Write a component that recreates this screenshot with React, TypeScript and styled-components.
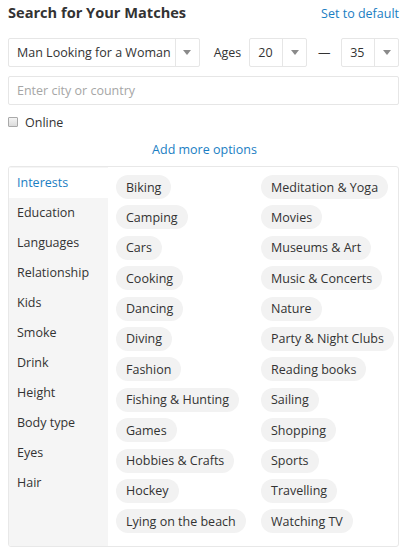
import React, { useState } from 'react';
import styled, { createGlobalStyle } from 'styled-components';

const GlobalStyle = createGlobalStyle`
    html, body {
        margin: 0;
        padding: 0;
        background: #ffffff;
    }
    body {
        font-family: "Open Sans", "Noto Sans", sans-serif;
        font-size: 12.5px;
        color: #333333;
    }
`;

const categories = [
    'Interests', 'Education', 'Languages', 'Relationship', 'Kids', 'Smoke',
    'Drink', 'Height', 'Body type', 'Eyes', 'Hair'
];

const interests = [
    'Biking', 'Meditation & Yoga',
    'Camping', 'Movies',
    'Cars', 'Museums & Art',
    'Cooking', 'Music & Concerts',
    'Dancing', 'Nature',
    'Diving', 'Party & Night Clubs',
    'Fashion', 'Reading books',
    'Fishing & Hunting', 'Sailing',
    'Games', 'Shopping',
    'Hobbies & Crafts', 'Sports',
    'Hockey', 'Travelling',
    'Lying on the beach', 'Watching TV'
];

const Arrow = () => (
    <svg width="8" height="5" viewBox="0 0 8 5">
        <path d="M0 0 L8 0 L4 5 Z" fill="#8a8a8a" />
    </svg>
);

const App: React.FC = () => {
    const [active, setActive] = useState<string>('Interests');

    return (
        <Page>
            <GlobalStyle />
            <Header>
                <Title>Search for Your Matches</Title>
                <LinkText>Set to default</LinkText>
            </Header>

            <FilterRow>
                <Select width={ 192 }>
                    <SelectValue>Man Looking for a Woman</SelectValue>
                    <SelectButton><Arrow /></SelectButton>
                </Select>
                <Label>Ages</Label>
                <Select width={ 58 }>
                    <SelectValue>20</SelectValue>
                    <SelectButton><Arrow /></SelectButton>
                </Select>
                <Dash>—</Dash>
                <Select width={ 58 }>
                    <SelectValue>35</SelectValue>
                    <SelectButton><Arrow /></SelectButton>
                </Select>
            </FilterRow>

            <LocationInput placeholder="Enter city or country" />

            <CheckRow>
                <CheckBox />
                <span>Online</span>
            </CheckRow>

            <MoreRow>
                <LinkText>Add more options</LinkText>
            </MoreRow>

            <Panel>
                <Sidebar>
                    { categories.map((c) => (
                        <MenuItem key={ c } $active={ c === active } onClick={ () => setActive(c) }>
                            { c }
                        </MenuItem>
                    )) }
                </Sidebar>
                <ChipGrid>
                    { interests.map((i) => (
                        <ChipCell key={ i }>
                            <Chip>{ i }</Chip>
                        </ChipCell>
                    )) }
                </ChipGrid>
            </Panel>
        </Page>
    );
}

const Page = styled.div`
    width: 391px;
    padding: 2px 5px 6px 8px;
`

const Header = styled.div`
    display: flex;
    justify-content: space-between;
    align-items: baseline;
    height: 26px;
`

const Title = styled.h1`
    margin: 0;
    font-size: 14.6px;
    font-weight: 700;
    color: #333333;
`

const LinkText = styled.a`
    color: #1a7ec3;
    font-size: 12.5px;
    cursor: pointer;
`

const FilterRow = styled.div`
    display: flex;
    align-items: center;
    margin-top: 10px;
    height: 29px;
`

const Select = styled.div<{ width: number }>`
    display: flex;
    width: ${ (p) => p.width }px;
    height: 29px;
    box-sizing: border-box;
    border: 1px solid #e6e6e6;
    border-radius: 2px;
`

const SelectValue = styled.div`
    flex: 1;
    display: flex;
    align-items: center;
    padding-left: 8px;
    white-space: nowrap;
    color: #333333;
`

const SelectButton = styled.div`
    width: 23px;
    display: flex;
    align-items: center;
    justify-content: center;
    border-left: 1px solid #e6e6e6;
`

const Label = styled.span`
    margin: 0 8px 0 14px;
    color: #333333;
`

const Dash = styled.span`
    width: 34px;
    text-align: center;
    color: #333333;
`

const LocationInput = styled.input`
    display: block;
    margin-top: 9px;
    width: 391px;
    height: 29px;
    box-sizing: border-box;
    border: 1px solid #e6e6e6;
    border-radius: 2px;
    padding: 0 8px;
    font-family: inherit;
    font-size: 12.5px;
    outline: none;

    &::placeholder {
        color: #a6a6a6;
    }
`

const CheckRow = styled.label`
    display: flex;
    align-items: center;
    gap: 7px;
    margin-top: 7px;
    height: 20px;
`

const CheckBox = styled.span`
    width: 8px;
    height: 8px;
    border: 1px solid #a9a9a9;
    border-radius: 1px;
    background: linear-gradient(#f4f4f4, #dcdcdc);
`

const MoreRow = styled.div`
    display: flex;
    justify-content: center;
    margin-top: 9px;
    height: 22px;
    padding-left: 2px;
`

const Panel = styled.div`
    display: flex;
    margin-top: 3px;
    width: 391px;
    height: 381px;
    box-sizing: border-box;
    border: 1px solid #e8e8e8;
    border-radius: 3px;
    overflow: hidden;
`

const Sidebar = styled.div`
    width: 99px;
    padding-top: 1px;
    background: #f5f5f5;
    display: flex;
    flex-direction: column;
`

const MenuItem = styled.div<{ $active: boolean }>`
    height: 30px;
    line-height: 29px;
    padding-left: 8px;
    background: ${ (p) => p.$active ? '#ffffff' : 'transparent' };
    color: ${ (p) => p.$active ? '#1a7ec3' : '#333333' };
    cursor: pointer;
`

const ChipGrid = styled.div`
    display: grid;
    grid-template-columns: 145px auto;
    grid-auto-rows: 24px;
    row-gap: 6.4px;
    padding: 8px 0 0 8px;
    align-content: start;
`

const ChipCell = styled.div`
    display: flex;
`

const Chip = styled.span`
    display: inline-flex;
    align-items: center;
    height: 24px;
    padding: 0 10px;
    border-radius: 12px;
    background: #f2f2f2;
    color: #333333;
    white-space: nowrap;
`

export default App;
